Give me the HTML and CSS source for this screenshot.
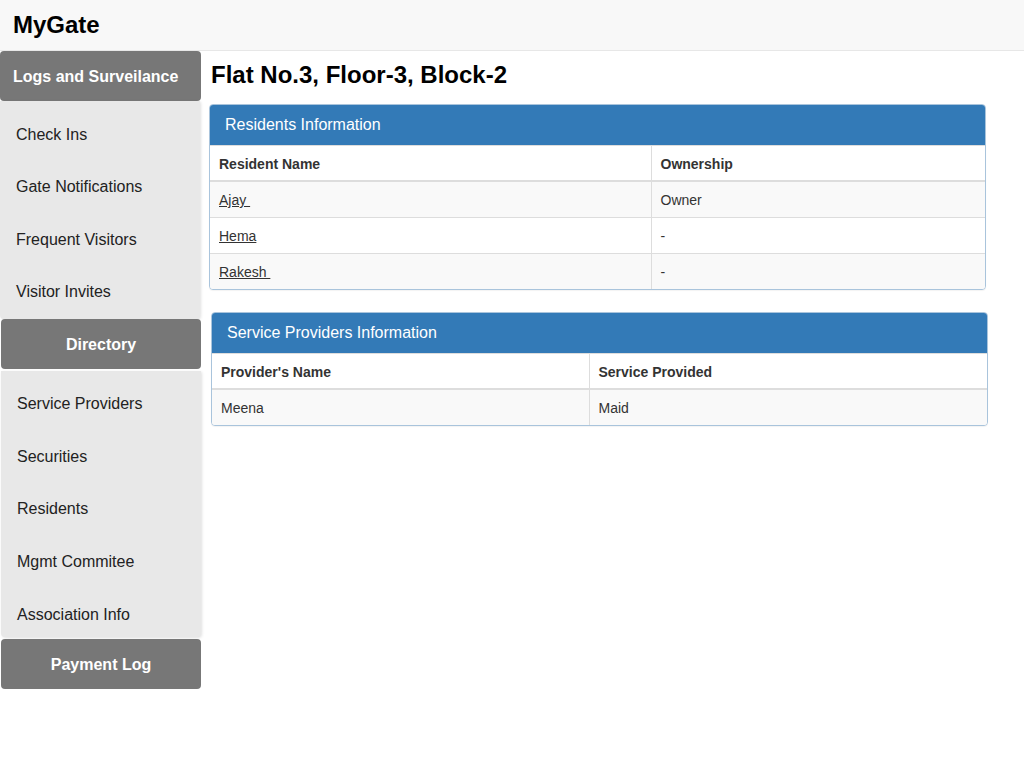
FILE: index.html
```html
<!DOCTYPE html>
<html>
<head>
<meta charset="utf-8">
<title>MyGate</title>
<link rel="stylesheet" href="styles.css">
</head>
<body>
<header class="topbar"><span class="brand">MyGate</span></header>
<div class="layout">
  <aside class="sidebar">
    <div class="menu-head menu-head-first">Logs and Surveilance</div>
    <ul class="menu-list menu-list-a">
      <li>Check Ins</li>
      <li>Gate Notifications</li>
      <li>Frequent Visitors</li>
      <li>Visitor Invites</li>
    </ul>
    <div class="menu-head menu-head-inset">Directory</div>
    <ul class="menu-list menu-list-b">
      <li>Service Providers</li>
      <li>Securities</li>
      <li>Residents</li>
      <li>Mgmt Commitee</li>
      <li>Association Info</li>
    </ul>
    <div class="menu-head menu-head-inset">Payment Log</div>
  </aside>
  <main class="content">
    <h1 class="title">Flat No.3, Floor-3, Block-2</h1>
    <section class="panel panel-residents">
      <div class="panel-heading">Residents Information</div>
      <table class="tbl">
        <colgroup><col class="col-res-name"><col></colgroup>
        <thead><tr><th>Resident Name</th><th>Ownership</th></tr></thead>
        <tbody>
          <tr><td><a href="#">Ajay&nbsp;</a></td><td>Owner</td></tr>
          <tr><td><a href="#">Hema</a></td><td>-</td></tr>
          <tr><td><a href="#">Rakesh&nbsp;</a></td><td>-</td></tr>
        </tbody>
      </table>
    </section>
    <section class="panel panel-providers">
      <div class="panel-heading">Service Providers Information</div>
      <table class="tbl">
        <colgroup><col class="col-prov-name"><col></colgroup>
        <thead><tr><th>Provider's Name</th><th>Service Provided</th></tr></thead>
        <tbody>
          <tr><td>Meena</td><td>Maid</td></tr>
        </tbody>
      </table>
    </section>
  </main>
</div>
</body>
</html>
```
FILE: styles.css
```css
* { box-sizing: border-box; }
html, body { margin: 0; padding: 0; background: #fff; }
body { font-family: "Liberation Sans", Arial, sans-serif; font-size: 14px; color: #333; line-height: 1.42857; }

.topbar { height: 51px; background: #f8f8f8; border-bottom: 1px solid #e7e7e7; padding: 11px 13px 0; }
.brand { font-size: 24px; font-weight: bold; color: #000; line-height: 28px; }

.layout { display: flex; align-items: flex-start; }

.sidebar { width: 201px; flex: none; }
.menu-head { height: 50px; background: #777; color: #fff; font-weight: bold; font-size: 16px; border-radius: 4px; display: flex; align-items: center; justify-content: center; padding-top: 2px; }
.menu-head-first { justify-content: flex-start; padding-left: 13px; }
.menu-head-inset { margin-left: 1px; }
.menu-list { list-style: none; margin: 0; padding: 8px 0 0; background: #e8e8e8; border-radius: 0 0 4px 4px; box-shadow: 1px 1px 3px rgba(0,0,0,.12); width: 200px; }
.menu-list li { height: 52.5px; display: flex; align-items: center; padding-left: 16px; font-size: 16px; color: #222; }
.menu-list-b { margin: 2px 0 2px 1px; padding-top: 7px; height: 266px; }
.menu-list-b li { height: 52.75px; padding-left: 16px; }

.content { flex: 1; padding: 0 0 0 7px; }
.title { margin: 10px 0 0 3px; font-size: 24px; font-weight: bold; color: #000; line-height: 28px; height: 33px; }

.panel { width: 777px; border: 1px solid #a9c4dc; border-radius: 4px; background: #fff; box-shadow: 0 1px 1px rgba(0,0,0,.05); overflow: hidden; }
.panel-residents { margin: 10px 0 0 1px; }
.panel-providers { margin: 22px 0 0 3px; }
.panel-heading { background: #337ab7; color: #fff; font-size: 16px; padding: 10px 15px 10px; line-height: 20px; border-bottom: 1px solid #ddd; }

.tbl { width: 100%; border-collapse: collapse; border-spacing: 0; }
.col-res-name { width: 441px; }
.col-prov-name { width: 377px; }
.tbl th, .tbl td { padding: 8px 8px 8px 9px; text-align: left; line-height: 19px; vertical-align: top; border-top: 1px solid #ddd; }
.tbl td { padding-top: 9px; padding-bottom: 7px; }
.tbl th + th, .tbl td + td { border-left: 1px solid #ddd; }
.tbl thead th { border-top: 0; border-bottom: 2px solid #ddd; font-weight: bold; color: #333; line-height: 18px; padding-top: 9px; padding-bottom: 7px; }
.tbl tbody tr:nth-child(odd) { background: #f9f9f9; }
.tbl a { color: #333; text-decoration: underline; }
```
